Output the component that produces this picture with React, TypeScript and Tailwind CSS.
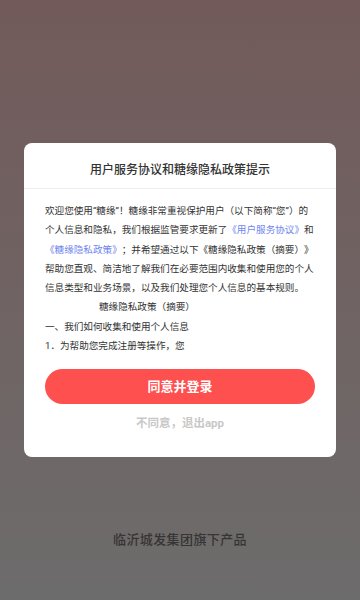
import React from "react";

const FONT = { fontFamily: "Roboto, 'Noto Sans CJK SC', sans-serif" };

export default function App() {
  const link = "text-[#7085ee]";
  return (
    <div
      className="min-h-[600px] w-[360px] bg-gradient-to-b from-[#725a5a] to-[#6d6c6c] pt-[143px] flex flex-col [text-spacing-trim:space-all]"
      style={FONT}
    >
      <div className="mx-6 rounded-lg bg-white flex flex-col">
        <div className="pt-[17px] pb-[8px] text-center text-[12px] leading-[20px] text-[#333333] font-medium">
          用户服务协议和糖缘隐私政策提示
        </div>
        <div className="h-px bg-[#eeeeee]" />
        <div className="px-[21px] pt-3 text-[9.6px] leading-[19.3px] text-[#333333] whitespace-nowrap">
          <div>欢迎您使用“糖缘”！糖缘非常重视保护用户（以下简称“您”）的</div>
          <div>
            个人信息和隐私，我们根据监管要求更新了<span className={link}>《用户服务协议》</span>和
          </div>
          <div>
            <span className={link}>《糖缘隐私政策》</span>；并希望通过以下《糖缘隐私政策（摘要）》
          </div>
          <div>帮助您直观、简洁地了解我们在必要范围内收集和使用您的个人</div>
          <div>信息类型和业务场景，以及我们处理您个人信息的基本规则。</div>
          <div className="pl-[54px]">糖缘隐私政策（摘要）</div>
          <div>一、我们如何收集和使用个人信息</div>
          <div>1．为帮助您完成注册等操作，您</div>
        </div>
        <div className="px-[21px] mt-[13.6px]">
          <button className="w-full h-[35px] rounded-full bg-[#ff5050] text-white text-[13px] font-bold flex items-center justify-center">
            同意并登录
          </button>
        </div>
        <div className="mt-[11px] mb-[26px] text-center text-[11.5px] leading-[16px] text-[#c8c8c8] font-bold">
          不同意，退出app
        </div>
      </div>
      <div className="mt-[74px] text-center text-[13px] leading-[18px] tracking-[0.4px] text-[#363434] font-medium">
        临沂城发集团旗下产品
      </div>
    </div>
  );
}
